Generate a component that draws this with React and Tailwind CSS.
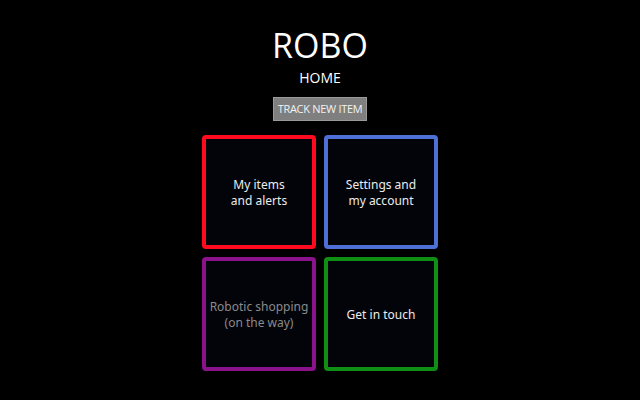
import React from "react";

function Card({ border, children, dim }) {
  return (
    <div
      className={`w-[114px] h-[114px] rounded-[4px] border-4 ${border} bg-[#03040a] flex items-center justify-center text-center text-[12px] leading-[16px] ${dim ? "text-[#8a8a8a]" : "text-[#ececec]"}`}
      style={{ fontFamily: '"Noto Sans", sans-serif' }}
    >
      <div className="pt-[2px]">{children}</div>
    </div>
  );
}

export default function App() {
  return (
    <div className="w-[640px] h-[400px] bg-black flex flex-col items-center" style={{ fontFamily: '"Open Sans", sans-serif' }}>
      <div className="mt-[25px] text-[34px] leading-[40px] text-white font-normal">ROBO</div>
      <div className="mt-[4px] text-[14px] leading-[18px] text-white">HOME</div>
      <div className="mt-[10px] w-[94px] h-[24px] bg-[#7f7f7f] border border-[#9a9a9a] text-[11px] text-[#f2f2f2] flex items-center justify-center tracking-[-0.3px]">
        TRACK NEW ITEM
      </div>
      <div className="mt-[14px] grid grid-cols-2 gap-[8px]">
        <Card border="border-[#ff0a1e]">My items<br />and alerts</Card>
        <Card border="border-[#4e6fd6]">Settings and<br />my account</Card>
        <Card border="border-[#8a128a]" dim>Robotic shopping<br />(on the way)</Card>
        <Card border="border-[#0f8f14]">Get in touch</Card>
      </div>
    </div>
  );
}
